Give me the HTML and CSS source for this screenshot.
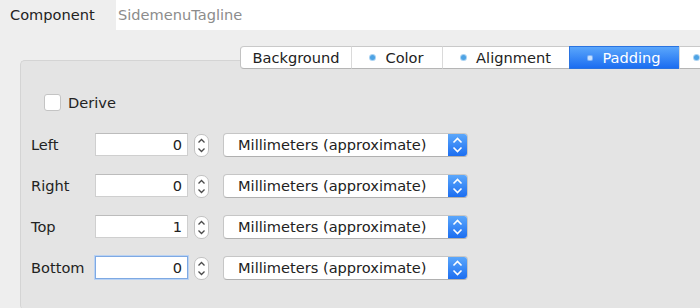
FILE: index.html
```html
<!DOCTYPE html>
<html lang="en">
<head>
  <meta charset="UTF-8" />
  <title>Component Style</title>
  <link rel="stylesheet" href="styles.css">
</head>
<body>
  <div class="top">
    <span class="top-label">Component</span>
    <div class="top-field">SidemenuTagline</div>
  </div>

  <div class="editor">
    <div class="tabs">
      <div class="tab tab-background">Background</div>
      <div class="tab tab-color"><span class="dot"></span>Color</div>
      <div class="tab tab-alignment"><span class="dot"></span>Alignment</div>
      <div class="tab tab-padding active"><span class="dot"></span>Padding</div>
      <div class="tab tab-more"><span class="dot"></span></div>
    </div>

    <div class="panel">
      <div class="derive"><span class="check"></span>Derive</div>

      <div class="rows">
        <div class="row">
          <span class="row-label">Left</span>
          <div class="num">0</div>
          <span class="stepper"><svg width="15" height="23" viewBox="0 0 15 23"><path d="M4.5 8.5 L7.5 5.5 L10.5 8.5 M4.5 14.5 L7.5 17.5 L10.5 14.5" /></svg></span>
          <div class="select">
            <span class="select-text">Millimeters (approximate)</span>
            <span class="select-arrows"><svg width="19" height="24" viewBox="0 0 19 24"><path d="M5.5 9.5 L9.5 5.5 L13.5 9.5 M5.5 14.5 L9.5 18.5 L13.5 14.5" /></svg></span>
          </div>
        </div>

        <div class="row">
          <span class="row-label">Right</span>
          <div class="num">0</div>
          <span class="stepper"><svg width="15" height="23" viewBox="0 0 15 23"><path d="M4.5 8.5 L7.5 5.5 L10.5 8.5 M4.5 14.5 L7.5 17.5 L10.5 14.5" /></svg></span>
          <div class="select">
            <span class="select-text">Millimeters (approximate)</span>
            <span class="select-arrows"><svg width="19" height="24" viewBox="0 0 19 24"><path d="M5.5 9.5 L9.5 5.5 L13.5 9.5 M5.5 14.5 L9.5 18.5 L13.5 14.5" /></svg></span>
          </div>
        </div>

        <div class="row">
          <span class="row-label">Top</span>
          <div class="num">1</div>
          <span class="stepper"><svg width="15" height="23" viewBox="0 0 15 23"><path d="M4.5 8.5 L7.5 5.5 L10.5 8.5 M4.5 14.5 L7.5 17.5 L10.5 14.5" /></svg></span>
          <div class="select">
            <span class="select-text">Millimeters (approximate)</span>
            <span class="select-arrows"><svg width="19" height="24" viewBox="0 0 19 24"><path d="M5.5 9.5 L9.5 5.5 L13.5 9.5 M5.5 14.5 L9.5 18.5 L13.5 14.5" /></svg></span>
          </div>
        </div>

        <div class="row">
          <span class="row-label">Bottom</span>
          <div class="num focused">0</div>
          <span class="stepper"><svg width="15" height="23" viewBox="0 0 15 23"><path d="M4.5 8.5 L7.5 5.5 L10.5 8.5 M4.5 14.5 L7.5 17.5 L10.5 14.5" /></svg></span>
          <div class="select">
            <span class="select-text">Millimeters (approximate)</span>
            <span class="select-arrows"><svg width="19" height="24" viewBox="0 0 19 24"><path d="M5.5 9.5 L9.5 5.5 L13.5 9.5 M5.5 14.5 L9.5 18.5 L13.5 14.5" /></svg></span>
          </div>
        </div>
      </div>
    </div>
  </div>
</body>
</html>
```

FILE: styles.css
```css
body {
  margin: 0;
  width: 700px;
  height: 308px;
  overflow: hidden;
  background: #eeeeee;
  font-family: 'DejaVu Sans', sans-serif;
  font-size: 14.6px;
  color: #222;
}
.top {
  display: flex;
  height: 30px;
  align-items: stretch;
}
.top-label {
  width: 106px;
  padding-left: 10px;
  line-height: 29px;
}
.top-field {
  flex: 1;
  background: #fff;
  color: #8c8c8c;
  padding-left: 2px;
  line-height: 29px;
}
.editor {
  margin: 16px 0 0 20px;
}
.tabs {
  position: relative;
  z-index: 1;
  display: flex;
  padding-left: 220px;
  height: 23px;
}
.tab {
  flex: none;
  display: flex;
  align-items: center;
  justify-content: center;
  height: 21px;
  background: #fff;
  border-top: 1px solid #c9c9c9;
  border-bottom: 1px solid #b5b5b5;
  border-left: 1px solid #dadada;
  white-space: nowrap;
}
.tab-background {
  width: 110px;
  border-left: 1px solid #c2c2c2;
  border-radius: 4px 0 0 4px;
}
.tab-color { width: 90px; }
.tab-alignment { width: 126px; }
.tab-padding { width: 109px; }
.tab-more {
  width: 6px;
  justify-content: flex-start;
  padding-left: 14px;
}
.dot {
  flex: none;
  width: 5px;
  height: 5px;
  border-radius: 50%;
  background: #4ea3e4;
  box-shadow: 0 0 0 1px #a9d2f2;
  margin-right: 10px;
}
.tab-more .dot {
  margin-right: 0;
}
.tab.active {
  background: linear-gradient(to bottom, #5aa6fb, #1b6df1);
  border-color: #2a73e0;
  color: #fff;
}
.tab.active .dot {
  width: 4px;
  height: 4px;
  border-radius: 1px;
  background: #c8e0ff;
  box-shadow: 0 0 0 1px #7fb3f6;
}
.panel {
  margin-top: -9px;
  width: 680px;
  height: 250px;
  box-sizing: border-box;
  background: #e4e4e4;
  border: 1px solid #d4d4d4;
  border-right: none;
  border-radius: 5px 0 0 5px;
}
.derive {
  display: flex;
  align-items: center;
  height: 17px;
  margin: 33px 0 0 23px;
}
.check {
  width: 15px;
  height: 15px;
  background: #fff;
  border: 1px solid #c4c4c4;
  border-radius: 3px;
  margin-right: 7px;
}
.rows {
  display: flex;
  flex-direction: column;
  gap: 17px;
  margin-top: 22px;
  padding-left: 10px;
}
.row {
  display: flex;
  align-items: flex-start;
  height: 24px;
}
.row-label {
  width: 64px;
  line-height: 23px;
}
.num {
  width: 86px;
  height: 21px;
  background: #fff;
  border: 1px solid #cfcfcf;
  border-top-color: #bcbcbc;
  text-align: right;
  padding-right: 5px;
  line-height: 22px;
}
.num.focused {
  border: 1px solid #7ea9e3;
  box-shadow: 0 0 0 1px #b9d2f3;
}
.stepper {
  margin-left: 6px;
  width: 15px;
  height: 23px;
  margin-top: 1px;
  box-sizing: border-box;
  background: #fff;
  border: 1px solid #c2c2c2;
  border-radius: 7px;
  display: flex;
  align-items: center;
  justify-content: center;
}
.stepper svg {
  flex: none;
  fill: none;
  stroke: #4a4a4a;
  stroke-width: 1.3;
}
.select {
  margin-left: 14px;
  width: 245px;
  height: 24px;
  box-sizing: border-box;
  display: flex;
  background: #fff;
  border: 1px solid #c6c6c6;
  border-bottom-color: #b0b0b0;
  border-radius: 4px;
  overflow: hidden;
}
.select-text {
  flex: 1;
  padding-left: 14px;
  line-height: 22px;
}
.select-arrows {
  width: 19px;
  background: linear-gradient(to bottom, #5ba7fb, #1c6ef1);
  display: flex;
  align-items: center;
  justify-content: center;
}
.select-arrows svg {
  fill: none;
  stroke: #fff;
  stroke-width: 1.6;
}
```
